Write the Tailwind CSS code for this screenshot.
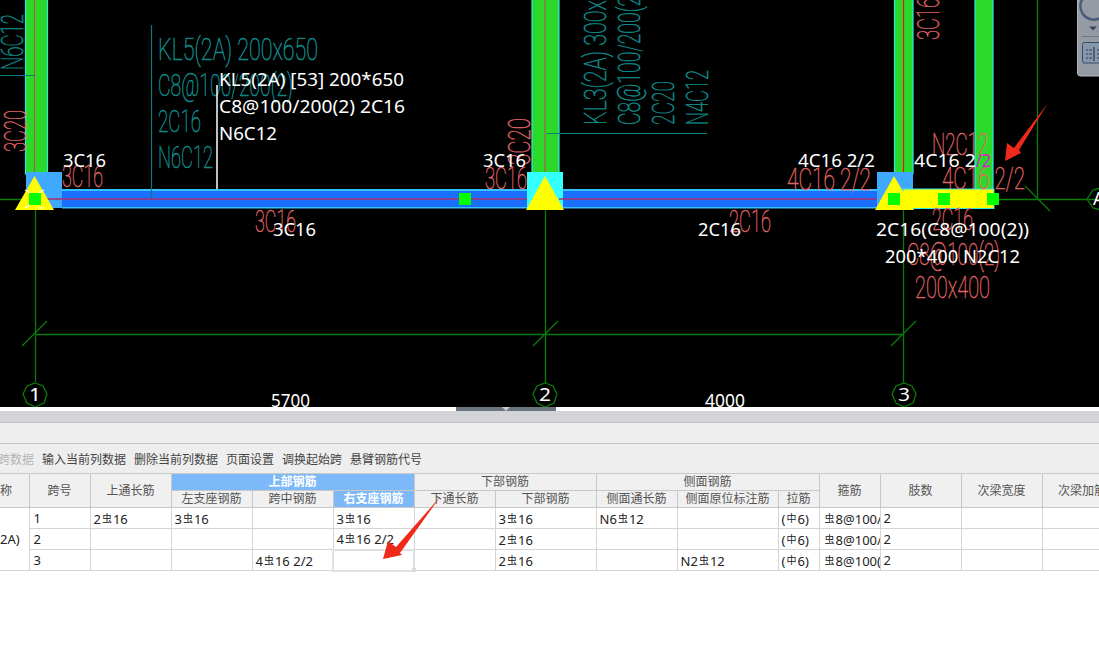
<!DOCTYPE html>
<html lang="zh">
<head>
<meta charset="utf-8">
<script src="https://cdn.jsdelivr.net/npm/@tailwindcss/browser@4"></script>
</head>
<body class="bg-white overflow-hidden">
<div class="relative w-[1099px] h-[647px] overflow-hidden bg-white font-['Noto_Sans','Noto_Sans_CJK_SC',sans-serif]">

  <!-- CAD canvas -->
  <div class="relative h-[407px] bg-black overflow-hidden">
    <svg width="1099" height="407" viewBox="0 0 1099 407" class="block">
      <!-- grid lines -->
      <g stroke="#0a7c0a" stroke-width="1.3" fill="none">
        <path d="M0 199.5H26M999 199.5H1099M1037.5 0V199.5"/>
        <path d="M35.5 208V382M545.5 208V383M903.5 208V383"/>
        <path d="M35 334.5H904M22 346L47 321M533 346L558 321M891 346L916 321M1025 186L1050 211"/>
        <polygon points="35,383 43,386 47,394 44,403 35,407 27,403 23,394 27,386"/>
        <polygon points="545,383 553,386 557,394 554,403 545,407 537,403 533,394 537,386"/>
        <polygon points="904,383 912,386 916,394 913,403 904,407 896,403 892,394 896,386"/>
        <polygon points="1105,187 1093,190 1087,199 1093,208 1105,211"/>
      </g>

      <!-- columns -->
      <g fill="#2bd92b" stroke="#33e8e8" stroke-width="1.2">
        <rect x="25.5" y="-2" width="22" height="176"/>
        <rect x="532" y="-2" width="27" height="176"/>
        <rect x="894.5" y="-2" width="18.5" height="176"/>
        <rect x="975" y="-2" width="18" height="192"/>
      </g>
      <path d="M34.5 0V199M545 0V199" stroke="#a8603c" stroke-width="1.2"/>
      <path d="M903.5 0V199" stroke="#f01010" stroke-width="1.2"/>

      <!-- supports -->
      <rect x="26" y="172" width="36" height="36" fill="#3fa9ff"/>
      <rect x="527" y="172" width="36" height="36" fill="#33ffff"/>
      <rect x="877" y="172" width="36" height="36" fill="#3fa9ff"/>

      <!-- beams -->
      <rect x="62" y="189" width="465" height="19.5" fill="#33c4ff"/>
      <rect x="62" y="191" width="465" height="16" fill="#1a6fff"/>
      <rect x="563" y="189" width="314" height="19.5" fill="#33c4ff"/>
      <rect x="563" y="191" width="314" height="16" fill="#1a6fff"/>
      <path d="M47 199H527M559 199H877" stroke="#a8306c" stroke-width="1.5"/>
      <rect x="903" y="189" width="91" height="19.5" fill="#ffff00" stroke="#33e8e8" stroke-width="1"/>

      <!-- triangles -->
      <polygon points="34.5,176 54,210 15,210" fill="#ffff00"/>
      <polygon points="545,176 564,210 526,210" fill="#ffff00"/>
      <polygon points="894,176 914,210 875,210" fill="#ffff00"/>
      <path d="M25 190l5 3M44 190l-5 3M25 208l5-3M38 208h6" stroke="#fff" stroke-width="1.2"/>

      <!-- nodes -->
      <g fill="#00ff00">
        <rect x="29" y="193" width="12" height="12"/>
        <rect x="459" y="193" width="12" height="12"/>
        <rect x="888" y="193" width="12" height="12"/>
        <rect x="938" y="193" width="12" height="12"/>
        <rect x="987" y="193" width="12" height="12"/>
      </g>

      <!-- teal drawn annotation -->
      <path d="M151.5 25V199M0 75.5H35M547 133.5H707" stroke="#0b7a7a" stroke-width="1.2"/>
      <g fill="#0f8a8a" stroke="#0f8a8a" stroke-width="0.6" font-size="31" font-weight="100" class="font-['Roboto',sans-serif]">
        <text x="158" y="60" textLength="160" lengthAdjust="spacingAndGlyphs">KL5(2A) 200x650</text>
        <text x="158" y="96" textLength="135" lengthAdjust="spacingAndGlyphs">C8@100/200(2)</text>
        <text x="158" y="132" textLength="43" lengthAdjust="spacingAndGlyphs">2C16</text>
        <text x="158" y="168" textLength="55" lengthAdjust="spacingAndGlyphs">N6C12</text>
        <text transform="translate(23 70) rotate(-90)" textLength="56" lengthAdjust="spacingAndGlyphs">N6C12</text>
        <text transform="translate(606 125) rotate(-90)" textLength="160" lengthAdjust="spacingAndGlyphs">KL3(2A) 300x650</text>
        <text transform="translate(640 125) rotate(-90)" textLength="135" lengthAdjust="spacingAndGlyphs">C8@100/200(2)</text>
        <text transform="translate(674 125) rotate(-90)" textLength="44" lengthAdjust="spacingAndGlyphs">2C20</text>
        <text transform="translate(708 125) rotate(-90)" textLength="55" lengthAdjust="spacingAndGlyphs">N4C12</text>
      </g>

      <!-- red drawn annotation -->
      <g fill="#e06464" stroke="#e06464" stroke-width="0.5" font-size="31" font-weight="100" class="font-['Roboto',sans-serif]">
        <text x="62" y="187" textLength="41" lengthAdjust="spacingAndGlyphs">3C16</text>
        <text x="485" y="189" textLength="42" lengthAdjust="spacingAndGlyphs">3C16</text>
        <text x="255" y="232" textLength="41" lengthAdjust="spacingAndGlyphs">3C16</text>
        <text x="729" y="232" textLength="42" lengthAdjust="spacingAndGlyphs">2C16</text>
        <text x="932" y="230" textLength="41" lengthAdjust="spacingAndGlyphs">2C16</text>
        <text x="787" y="190" textLength="84" lengthAdjust="spacingAndGlyphs">4C16 2/2</text>
        <text x="942" y="189" textLength="83" lengthAdjust="spacingAndGlyphs">4C16 2/2</text>
        <text x="932" y="155" textLength="56" lengthAdjust="spacingAndGlyphs">N2C12</text>
        <text x="907" y="265" textLength="93" lengthAdjust="spacingAndGlyphs">C8@100(2)</text>
        <text x="915" y="298" textLength="75" lengthAdjust="spacingAndGlyphs">200x400</text>
        <text transform="translate(26 152) rotate(-90)" textLength="42" lengthAdjust="spacingAndGlyphs">3C20</text>
        <text transform="translate(530 165) rotate(-90)" textLength="47" lengthAdjust="spacingAndGlyphs">3C20</text>
        <text transform="translate(939 40) rotate(-90)" textLength="42" lengthAdjust="spacingAndGlyphs">3C16</text>
      </g>

      <!-- white labels -->
      <path d="M217 85V189" stroke="#fff" stroke-width="1.5"/>
      <g fill="#fff" font-size="18" class="font-['Noto_Sans',sans-serif]">
        <text x="219" y="86" textLength="185" lengthAdjust="spacingAndGlyphs">KL5(2A) [53] 200*650</text>
        <text x="219" y="113" textLength="186" lengthAdjust="spacingAndGlyphs">C8@100/200(2) 2C16</text>
        <text x="219" y="140" textLength="58" lengthAdjust="spacingAndGlyphs">N6C12</text>
        <text x="63" y="167" textLength="43" lengthAdjust="spacingAndGlyphs">3C16</text>
        <text x="483" y="167" textLength="43" lengthAdjust="spacingAndGlyphs">3C16</text>
        <text x="798" y="167" textLength="77" lengthAdjust="spacingAndGlyphs">4C16 2/2</text>
        <text x="914" y="167" textLength="62" lengthAdjust="spacingAndGlyphs">4C16 2</text>
        <text x="976" y="167" textLength="15" lengthAdjust="spacingAndGlyphs" fill="#d020d0">/2</text>
        <text x="273" y="236" textLength="43" lengthAdjust="spacingAndGlyphs">3C16</text>
        <text x="698" y="236" textLength="43" lengthAdjust="spacingAndGlyphs">2C16</text>
        <text x="876" y="236" textLength="153" lengthAdjust="spacingAndGlyphs">2C16(C8@100(2))</text>
        <text x="885" y="263" textLength="135" lengthAdjust="spacingAndGlyphs">200*400 N2C12</text>
        <text x="271" y="407" textLength="39" lengthAdjust="spacingAndGlyphs">5700</text>
        <text x="705" y="407" textLength="40" lengthAdjust="spacingAndGlyphs">4000</text>
        <text x="29" y="401" textLength="12" lengthAdjust="spacingAndGlyphs">1</text>
        <text x="539" y="401" textLength="12" lengthAdjust="spacingAndGlyphs">2</text>
        <text x="898" y="401" textLength="12" lengthAdjust="spacingAndGlyphs">3</text>
        <text x="1093" y="205">A</text>
      </g>

      <!-- view widget -->
      <rect x="1077.5" y="-6" width="30" height="82" rx="3" fill="#959ba4" stroke="#b4b8bd"/>
      <path d="M1100 18.2A13.5 13.5 0 0 1 1085 -4" fill="none" stroke="#4a5a78" stroke-width="2.4"/>
      <polygon points="1089,26.5 1097,26.5 1093,30.5" fill="#3a4658"/>
      <path d="M1082 36.5H1099" stroke="#74787f"/>
      <rect x="1082.5" y="42.5" width="22" height="20.5" rx="2" fill="#8597ad" stroke="#3c4a60"/>
      <path d="M1086 50h2M1089 50h3M1086 54h2M1089 54h3M1086 58h2M1089 58h3M1094 47V61M1097 50h2M1097 54h2M1097 58h2" stroke="#2f3a50" stroke-width="1.2"/>
    </svg>
  </div>

  <!-- splitter -->
  <div class="relative h-[4px] bg-white">
    <div class="w-[100px] h-[4px] ml-[456px] bg-[#6b7680] flex justify-center">
      <div class="w-0 h-0 border-x-[4px] border-x-transparent border-t-[4px] border-t-[#c8ccd0]"></div>
    </div>
  </div>
  <div class="h-[12px] bg-[#d3d4d8] border-b border-[#bfc0c4]"></div>
  <div class="h-[21px] bg-[#eeeeee] border-b border-[#c4c4c4]"></div>

  <!-- toolbar -->
  <div class="h-[29px] pt-[3px] bg-[#eeeeee] flex items-center gap-2 -ml-[2px] text-[12px] text-[#444] whitespace-nowrap">
    <span class="text-[#b4b4b4]">跨数据</span>
    <span>输入当前列数据</span>
    <span>删除当前列数据</span>
    <span>页面设置</span>
    <span>调换起始跨</span>
    <span>悬臂钢筋代号</span>
  </div>

  <!-- table -->
  <table class="table-fixed border-collapse w-[1122px] text-[12px] text-[#222] bg-white">
    <colgroup>
      <col class="w-[29px]"><col class="w-[61px]"><col class="w-[81px]"><col class="w-[81px]"><col class="w-[81px]"><col class="w-[81px]"><col class="w-[81px]"><col class="w-[101px]"><col class="w-[81px]"><col class="w-[101px]"><col class="w-[41px]"><col class="w-[61px]"><col class="w-[81px]"><col class="w-[81px]"><col class="w-[80px]">
    </colgroup>
    <thead class="text-[#555] font-normal leading-[16px]">
      <tr class="h-[17px]">
        <th rowspan="2" class="font-normal bg-[#f0f0f0] border border-l-0 border-[#c8c8c8] text-left p-0">称</th>
        <th rowspan="2" class="font-normal bg-[#f0f0f0] border border-[#c8c8c8] p-0">跨号</th>
        <th rowspan="2" class="font-normal bg-[#f0f0f0] border border-[#c8c8c8] p-0">上通长筋</th>
        <th colspan="3" class="font-bold bg-[#7db8f8] text-white border border-[#c8c8c8] p-0">上部钢筋</th>
        <th colspan="2" class="font-normal bg-[#f0f0f0] border border-[#c8c8c8] p-0">下部钢筋</th>
        <th colspan="3" class="font-normal bg-[#f0f0f0] border border-[#c8c8c8] p-0">侧面钢筋</th>
        <th rowspan="2" class="font-normal bg-[#f0f0f0] border border-[#c8c8c8] p-0">箍筋</th>
        <th rowspan="2" class="font-normal bg-[#f0f0f0] border border-[#c8c8c8] p-0">肢数</th>
        <th rowspan="2" class="font-normal bg-[#f0f0f0] border border-[#c8c8c8] p-0">次梁宽度</th>
        <th rowspan="2" class="font-normal bg-[#f0f0f0] border border-[#c8c8c8] p-0 whitespace-nowrap overflow-hidden">次梁加筋</th>
      </tr>
      <tr class="h-[17px]">
        <th class="font-normal bg-[#f0f0f0] border border-[#c8c8c8] p-0">左支座钢筋</th>
        <th class="font-normal bg-[#f0f0f0] border border-[#c8c8c8] p-0">跨中钢筋</th>
        <th class="font-bold bg-[#7db8f8] text-white border border-[#c8c8c8] p-0">右支座钢筋</th>
        <th class="font-normal bg-[#f0f0f0] border border-[#c8c8c8] p-0">下通长筋</th>
        <th class="font-normal bg-[#f0f0f0] border border-[#c8c8c8] p-0">下部钢筋</th>
        <th class="font-normal bg-[#f0f0f0] border border-[#c8c8c8] p-0">侧面通长筋</th>
        <th class="font-normal bg-[#f0f0f0] border border-[#c8c8c8] p-0">侧面原位标注筋</th>
        <th class="font-normal bg-[#f0f0f0] border border-[#c8c8c8] p-0">拉筋</th>
      </tr>
    </thead>
    <tbody class="text-[13px] leading-[16px]">
      <tr class="h-[21px]">
        <td rowspan="3" class="border border-l-0 border-[#d4d4d4] p-0 text-left whitespace-nowrap overflow-hidden">2A)</td>
        <td class="border border-[#d4d4d4] pl-[4px] py-0">1</td>
        <td class="border border-[#d4d4d4] pl-[3px] py-0 whitespace-nowrap overflow-hidden">2<span class="text-[10px] align-[2px] px-px">虫</span>16</td>
        <td class="border border-[#d4d4d4] pl-[3px] py-0 whitespace-nowrap overflow-hidden">3<span class="text-[10px] align-[2px] px-px">虫</span>16</td>
        <td class="border border-[#d4d4d4] p-0"></td>
        <td class="border border-[#d4d4d4] pl-[3px] py-0 whitespace-nowrap overflow-hidden">3<span class="text-[10px] align-[2px] px-px">虫</span>16</td>
        <td class="border border-[#d4d4d4] p-0"></td>
        <td class="border border-[#d4d4d4] pl-[3px] py-0 whitespace-nowrap overflow-hidden">3<span class="text-[10px] align-[2px] px-px">虫</span>16</td>
        <td class="border border-[#d4d4d4] pl-[3px] py-0 whitespace-nowrap overflow-hidden">N6<span class="text-[10px] align-[2px] px-px">虫</span>12</td>
        <td class="border border-[#d4d4d4] p-0"></td>
        <td class="border border-[#d4d4d4] pl-[3px] py-0 whitespace-nowrap overflow-hidden">(<span class="text-[10px] align-[2px] px-px">中</span>6)</td>
        <td class="border border-[#d4d4d4] pl-[4px] py-0 whitespace-nowrap overflow-hidden"><span class="text-[10px] align-[2px] px-px">虫</span>8@100/</td>
        <td class="border border-[#d4d4d4] pl-[3px] py-0">2</td>
        <td class="border border-[#d4d4d4] p-0"></td>
        <td class="border border-[#d4d4d4] p-0"></td>
      </tr>
      <tr class="h-[21px]">
        <td class="border border-[#d4d4d4] pl-[4px] py-0">2</td>
        <td class="border border-[#d4d4d4] p-0"></td>
        <td class="border border-[#d4d4d4] p-0"></td>
        <td class="border border-[#d4d4d4] p-0"></td>
        <td class="border border-[#d4d4d4] pl-[3px] py-0 whitespace-nowrap overflow-hidden">4<span class="text-[10px] align-[2px] px-px">虫</span>16 2/2</td>
        <td class="border border-[#d4d4d4] p-0"></td>
        <td class="border border-[#d4d4d4] pl-[3px] py-0 whitespace-nowrap overflow-hidden">2<span class="text-[10px] align-[2px] px-px">虫</span>16</td>
        <td class="border border-[#d4d4d4] p-0"></td>
        <td class="border border-[#d4d4d4] p-0"></td>
        <td class="border border-[#d4d4d4] pl-[3px] py-0 whitespace-nowrap overflow-hidden">(<span class="text-[10px] align-[2px] px-px">中</span>6)</td>
        <td class="border border-[#d4d4d4] pl-[4px] py-0 whitespace-nowrap overflow-hidden"><span class="text-[10px] align-[2px] px-px">虫</span>8@100/</td>
        <td class="border border-[#d4d4d4] pl-[3px] py-0">2</td>
        <td class="border border-[#d4d4d4] p-0"></td>
        <td class="border border-[#d4d4d4] p-0"></td>
      </tr>
      <tr class="h-[21px]">
        <td class="border border-[#d4d4d4] pl-[4px] py-0">3</td>
        <td class="border border-[#d4d4d4] p-0"></td>
        <td class="border border-[#d4d4d4] p-0"></td>
        <td class="border border-[#d4d4d4] pl-[3px] py-0 whitespace-nowrap overflow-hidden">4<span class="text-[10px] align-[2px] px-px">虫</span>16 2/2</td>
        <td class="border-2 border-[#e0e0e0] p-0"></td>
        <td class="border border-[#d4d4d4] p-0"></td>
        <td class="border border-[#d4d4d4] pl-[3px] py-0 whitespace-nowrap overflow-hidden">2<span class="text-[10px] align-[2px] px-px">虫</span>16</td>
        <td class="border border-[#d4d4d4] p-0"></td>
        <td class="border border-[#d4d4d4] pl-[3px] py-0 whitespace-nowrap overflow-hidden">N2<span class="text-[10px] align-[2px] px-px">虫</span>12</td>
        <td class="border border-[#d4d4d4] pl-[3px] py-0 whitespace-nowrap overflow-hidden">(<span class="text-[10px] align-[2px] px-px">中</span>6)</td>
        <td class="border border-[#d4d4d4] pl-[4px] py-0 whitespace-nowrap overflow-hidden"><span class="text-[10px] align-[2px] px-px">虫</span>8@100(</td>
        <td class="border border-[#d4d4d4] pl-[3px] py-0">2</td>
        <td class="border border-[#d4d4d4] p-0"></td>
        <td class="border border-[#d4d4d4] p-0"></td>
      </tr>
    </tbody>
  </table>

  <!-- annotation arrows, over everything -->
  <svg width="1099" height="647" viewBox="0 0 1099 647" class="absolute inset-0 pointer-events-none">
    <rect x="412" y="568" width="4" height="4" fill="#dcdcdc"/>
    <polygon points="1048,103 1019,150 1021,153 1005,161 1007,143 1014,148" fill="#f02a1a"/>
    <polygon points="440,497 400,553 402,555 383,559 388,541 396,547" fill="#f02a1a"/>
  </svg>
</div>
</body>
</html>
